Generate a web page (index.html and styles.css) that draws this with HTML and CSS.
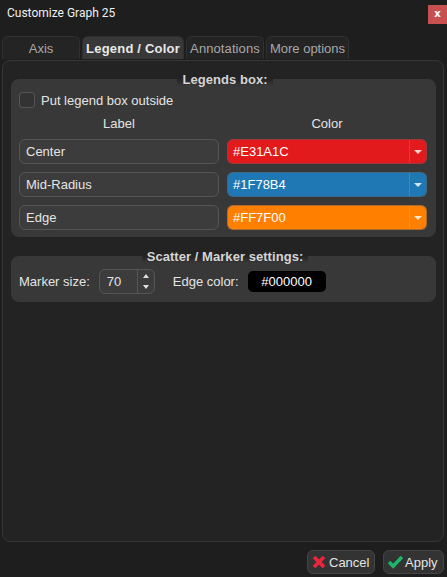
FILE: index.html
```html
<!DOCTYPE html>
<html lang="en">
<head>
    <meta charset="UTF-8">
    <title>Customize Graph 25</title>
    <link rel="stylesheet" href="styles.css">
</head>
<body>
    <div class="window">
        <div class="titlebar">
            <span class="title">Customize Graph 25</span>
            <span class="close">x</span>
        </div>

        <div class="tabs">
            <div class="tab tab-axis">Axis</div>
            <div class="tab tab-legend active">Legend / Color</div>
            <div class="tab tab-notes">Annotations</div>
            <div class="tab tab-more">More options</div>
        </div>

        <div class="pane">
            <section class="group group-legend">
                <h2 class="group-title"><span>Legends box:</span></h2>
                <label class="check">
                    <span class="check-box"></span>
                    <span>Put legend box outside</span>
                </label>
                <div class="legend-grid">
                    <div class="head">Label</div>
                    <div class="head">Color</div>

                    <div class="field">Center</div>
                    <div class="combo combo-red"><span class="combo-value">#E31A1C</span><span class="combo-drop"></span></div>

                    <div class="field">Mid-Radius</div>
                    <div class="combo combo-blue"><span class="combo-value">#1F78B4</span><span class="combo-drop"></span></div>

                    <div class="field">Edge</div>
                    <div class="combo combo-orange"><span class="combo-value">#FF7F00</span><span class="combo-drop"></span></div>
                </div>
            </section>

            <section class="group group-marker">
                <h2 class="group-title"><span>Scatter / Marker settings:</span></h2>
                <div class="marker-row">
                    <span>Marker size:</span>
                    <div class="spin">
                        <span class="spin-value">70</span>
                        <span class="spin-arrows">
                            <span class="arrow-up"></span>
                            <span class="arrow-down"></span>
                        </span>
                    </div>
                    <span class="edge-label">Edge color:</span>
                    <div class="swatch">#000000</div>
                </div>
            </section>
        </div>

        <div class="footer">
            <button class="btn btn-cancel">
                <svg class="btn-icon" width="14" height="14" viewBox="0 0 14 14"><path d="M2 2 L12 12 M12 2 L2 12" stroke="#e8263c" stroke-width="3.8" fill="none"/></svg>
                Cancel
            </button>
            <button class="btn btn-apply">
                <svg class="btn-icon" width="15" height="14" viewBox="0 0 15 14"><path d="M1 7 L5.2 11.2 L14 2" stroke="#1fb46a" stroke-width="3.6" fill="none"/></svg>
                Apply
            </button>
        </div>
    </div>
</body>
</html>
```

FILE: styles.css
```css
* {
    box-sizing: border-box;
}

html,
body {
    margin: 0;
    height: 100%;
}

body {
    background: #1e1e1e;
    color: #e4e4e4;
    font-family: "Liberation Sans", Arial, sans-serif;
    font-size: 13px;
}

.window {
    display: flex;
    flex-direction: column;
    height: 577px;
    padding: 0 3px 3px 2px;
}

/* title bar */
.titlebar {
    display: flex;
    justify-content: space-between;
    height: 36px;
    margin: 0 -3px 0 -2px;
    padding: 5px 0 0 7px;
}

.title {
    font-family: Roboto, sans-serif;
    font-size: 12px;
    color: #f0f0f0;
    line-height: 16px;
}

.close {
    width: 19px;
    height: 19px;
    background: #c75050;
    color: #fff;
    font-family: "DejaVu Sans", sans-serif;
    font-size: 10px;
    font-weight: bold;
    line-height: 18px;
    text-align: center;
}

/* tabs */
.tabs {
    display: flex;
    gap: 2px;
    height: 24px;
}

.tab {
    height: 23px;
    border: 1px solid #303030;
    border-bottom: none;
    border-radius: 6px 6px 0 0;
    background: #242424;
    color: #a8a8a8;
    line-height: 23px;
    text-align: center;
}

.tab-axis {
    width: 78px;
}

.tab-legend {
    width: 102px;
    letter-spacing: 0.2px;
}

.tab-notes {
    width: 78px;
    letter-spacing: 0.1px;
}

.tab-more {
    width: 83px;
}

.tab.active {
    background: #383838;
    color: #e8e8e8;
    font-weight: bold;
}

/* main pane */
.pane {
    flex: 1;
    height: 482px;
    padding: 18px 7px 0 8px;
    border: 1px solid #363636;
    border-radius: 8px;
    background: #232323;
}

.group {
    position: relative;
    border-radius: 8px;
    background: #383838;
}

.group-legend {
    height: 158px;
    padding: 13px 8px 0;
}

.group-marker {
    height: 46px;
    margin-top: 19px;
    padding: 13px 8px 0;
}

.group-title {
    position: absolute;
    top: -6px;
    left: 3px;
    right: 0;
    margin: 0;
    font-size: 13px;
    font-weight: bold;
    line-height: 13px;
    text-align: center;
    color: #d4d4d4;
}

.group-title span {
    display: inline-block;
    height: 13px;
    padding: 0 5px;
    letter-spacing: 0.05px;
    background: linear-gradient(#232323 45%, #383838);
}

/* legend box */
.check {
    display: flex;
    align-items: center;
    gap: 6px;
    height: 16px;
}

.check-box {
    width: 16px;
    height: 16px;
    border: 1px solid #555;
    border-radius: 3px;
    background: #333;
}

.legend-grid {
    display: grid;
    grid-template-columns: 200px 200px;
    column-gap: 8px;
    row-gap: 8px;
    margin-top: 8px;
}

.head {
    height: 16px;
    line-height: 16px;
    text-align: center;
    margin-bottom: -1px;
}

.field {
    height: 25px;
    padding-left: 6px;
    border: 1px solid #555;
    border-radius: 6px;
    background: #3c3c3c;
    line-height: 23px;
}

.combo {
    display: flex;
    height: 25px;
    border: 1px solid rgba(90, 90, 90, 0.5);
    border-radius: 6px;
    color: #fff;
    line-height: 23px;
}

.combo-red {
    background: #e31a1c;
}

.combo-blue {
    background: #1f78b4;
}

.combo-orange {
    background: #ff7f00;
}

.combo-value {
    flex: 1;
    padding-left: 5px;
}

.combo-drop {
    display: flex;
    align-items: center;
    justify-content: center;
    width: 17px;
    border-left: 1px solid rgba(255, 255, 255, 0.12);
}

.combo-drop::after {
    content: "";
    border-left: 4px solid transparent;
    border-right: 4px solid transparent;
    border-top: 4px solid rgba(255, 255, 255, 0.8);
}

/* marker settings */
.marker-row {
    display: flex;
    align-items: center;
    height: 25px;
}

.spin {
    display: flex;
    width: 56px;
    height: 25px;
    margin-left: 9px;
    border: 1px solid #555;
    border-radius: 6px;
    background: #3c3c3c;
    line-height: 23px;
}

.spin-value {
    flex: 1;
    padding-left: 7px;
}

.spin-arrows {
    display: flex;
    flex-direction: column;
    align-items: center;
    justify-content: space-between;
    width: 17px;
    padding: 4px 0;
    border-left: 1px solid #555;
}

.arrow-up {
    border-left: 3.5px solid transparent;
    border-right: 3.5px solid transparent;
    border-bottom: 4px solid #e0e0e0;
}

.arrow-down {
    border-left: 3.5px solid transparent;
    border-right: 3.5px solid transparent;
    border-top: 4px solid #e0e0e0;
}

.edge-label {
    margin-left: 18px;
}

.swatch {
    width: 78px;
    height: 21px;
    margin-left: 9px;
    border-radius: 5px;
    background: #000;
    color: #fff;
    line-height: 21px;
    text-align: center;
}

/* footer buttons */
.footer {
    display: flex;
    justify-content: flex-end;
    gap: 8px;
    padding-top: 8px;
}

.btn {
    display: flex;
    align-items: center;
    gap: 3px;
    height: 24px;
    padding: 0 4px;
    border: 1px solid #444;
    border-radius: 6px;
    background: #333;
    color: #e4e4e4;
    font-family: inherit;
    font-size: 13px;
}

.btn-cancel {
    width: 68px;
}

.btn-apply {
    width: 61px;
    gap: 2px;
}

.btn-icon {
    flex: none;
}
```
